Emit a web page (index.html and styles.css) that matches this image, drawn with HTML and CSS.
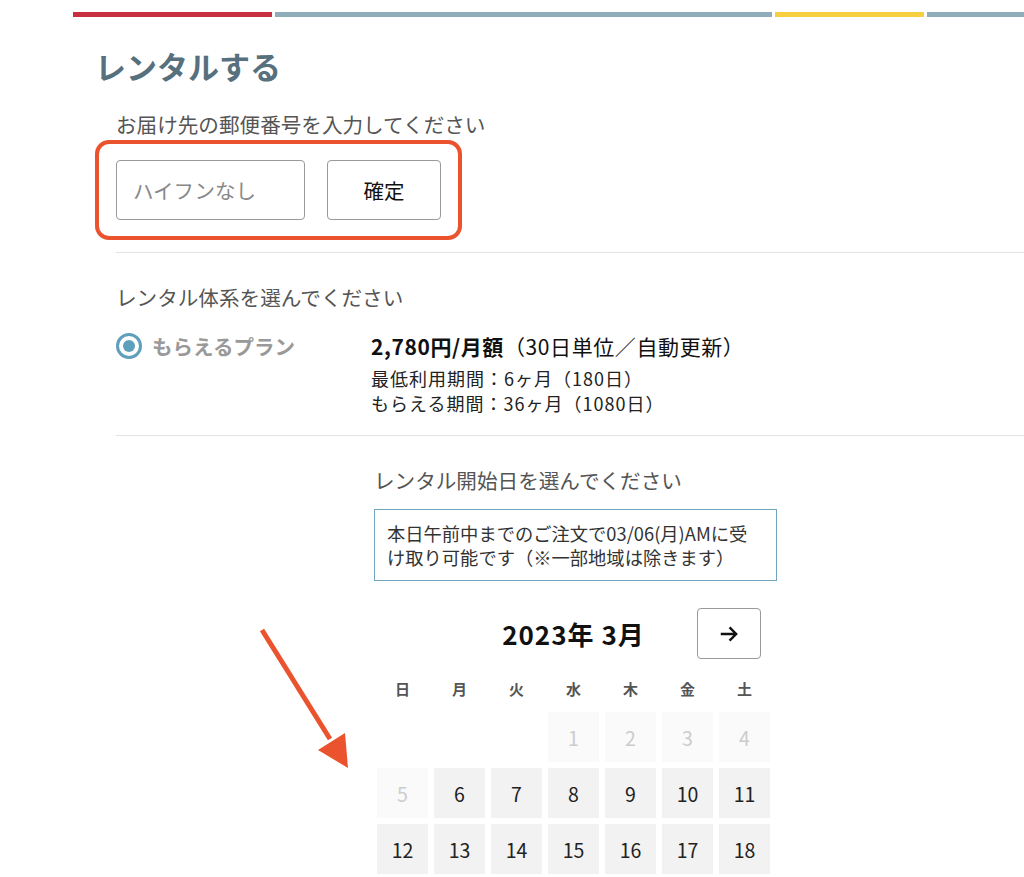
FILE: index.html
```html
<!DOCTYPE html>
<html lang="ja">
<head>
<meta charset="utf-8">
<title>レンタルする</title>
<link rel="stylesheet" href="styles.css">
</head>
<body>

<div class="page">

  <div class="steps">
    <span class="step red"></span>
    <span class="step gray long"></span>
    <span class="step yellow"></span>
    <span class="step gray rest"></span>
  </div>

  <h1 class="title">レンタルする</h1>

  <div class="content">

    <p class="label">お届け先の郵便番号を入力してください</p>
    <div class="zip-box">
      <input class="zip-input" type="text" placeholder="ハイフンなし">
      <button class="zip-button">確定</button>
    </div>

    <hr class="divider">

    <p class="label label-plan">レンタル体系を選んでください</p>
    <div class="plan">
      <label class="plan-name">
        <span class="radio"><span class="radio-dot"></span></span>
        もらえるプラン
      </label>
      <div class="plan-info">
        <p class="price"><b>2,780円/月額</b>（30日単位／自動更新）</p>
        <p class="term">最低利用期間：6ヶ月（180日）</p>
        <p class="term">もらえる期間：36ヶ月（1080日）</p>
      </div>
    </div>

    <hr class="divider divider-plan">

    <div class="start">
      <p class="label">レンタル開始日を選んでください</p>
      <div class="notice">本日午前中までのご注文で03/06(月)AMに受け取り可能です（※一部地域は除きます）</div>

      <div class="calendar">
        <div class="cal-head">
          <span></span>
          <span class="cal-month">2023年 3月</span>
          <button class="cal-next">
            <svg width="22" height="22" viewBox="0 0 20 20"><path d="M2.5 10h14M10.5 4l6 6-6 6" fill="none" stroke="#111" stroke-width="2.2"/></svg>
          </button>
        </div>
        <div class="cal-week">
          <span>日</span><span>月</span><span>火</span><span>水</span><span>木</span><span>金</span><span>土</span>
        </div>
        <div class="cal-days">
          <span class="day empty"></span>
          <span class="day empty"></span>
          <span class="day empty"></span>
          <span class="day off">1</span>
          <span class="day off">2</span>
          <span class="day off">3</span>
          <span class="day off">4</span>
          <span class="day off">5</span>
          <span class="day">6</span>
          <span class="day">7</span>
          <span class="day">8</span>
          <span class="day">9</span>
          <span class="day">10</span>
          <span class="day">11</span>
          <span class="day">12</span>
          <span class="day">13</span>
          <span class="day">14</span>
          <span class="day">15</span>
          <span class="day">16</span>
          <span class="day">17</span>
          <span class="day">18</span>
        </div>
      </div>
    </div>

  </div>

  <!-- annotation arrow -->
  <svg class="pointer" width="110" height="150" viewBox="0 0 110 150">
    <line x1="12" y1="15" x2="80" y2="124" stroke="#ea532d" stroke-width="5"/>
    <polygon points="98,153 68,135 95,118" fill="#ea532d"/>
  </svg>

</div>

</body>
</html>
```

FILE: styles.css
```css
body {
    margin: 0;
    font-family: "Noto Sans CJK JP", "Noto Sans", sans-serif;
    color: #222;
    background: #fff;
}

p {
    margin: 0;
}

.page {
    position: relative;
    padding-left: 73px;
    height: 877px;
    overflow: hidden;
}

.steps {
    display: flex;
    gap: 3px;
    margin-top: 12px;
    height: 5px;
}

.step {
    display: block;
    height: 5px;
    width: 199px;
}
.step.long { width: 497px; }
.step.yellow { width: 149px; }
.step.rest { flex: 1; }
.red { background-color: #c8303f; }
.gray { background-color: #8fadb8; }
.yellow { background-color: #f5cf3f; }

.title {
    margin: 29px 0 0 22px;
    font-size: 31px;
    line-height: 40px;
    font-weight: 700;
    color: #56707e;
}

.content {
    margin-left: 43px;
}

.label {
    font-size: 20.6px;
    line-height: 28px;
    color: #555;
    margin-top: 24px;
}

.zip-box {
    display: flex;
    gap: 22px;
    width: 329px;
    margin: 2px 0 0 -21px;
    padding: 16px 13px 16px 17px;
    border: 4px solid #ea532d;
    border-radius: 14px;
}

.zip-input {
    width: 189px;
    height: 60px;
    box-sizing: border-box;
    padding: 0 16px;
    border: 1px solid #999;
    border-radius: 4px;
    font-family: inherit;
    font-size: 20.5px;
}
.zip-input::placeholder {
    color: #888;
}

.zip-button {
    width: 114px;
    height: 60px;
    border: 1px solid #999;
    border-radius: 4px;
    background: #fff;
    font-family: inherit;
    font-size: 20.5px;
    color: #111;
}

.divider {
    border: 0;
    border-top: 1px solid #e2e2e2;
    margin: 12px 0 0;
}

.label-plan {
    margin-top: 30px;
}

.plan {
    display: flex;
    margin-top: 21px;
}

.plan-name {
    display: flex;
    align-items: center;
    gap: 10px;
    width: 255px;
    height: 28px;
    font-size: 20.5px;
    font-weight: 700;
    color: #999;
}

.radio {
    display: flex;
    align-items: center;
    justify-content: center;
    width: 26px;
    height: 26px;
    box-sizing: border-box;
    border: 3px solid #5e9fbb;
    border-radius: 50%;
}

.radio-dot {
    width: 12px;
    height: 12px;
    border-radius: 50%;
    background: #5e9fbb;
}

.price {
    font-size: 21px;
    line-height: 28px;
    letter-spacing: 0.6px;
    color: #111;
}

.price b {
    font-weight: 700;
}

.term {
    font-size: 18px;
    line-height: 25px;
    letter-spacing: 1px;
    color: #222;
}

.price + .term {
    margin-top: 6px;
}

.divider-plan {
    margin-top: 19px;
}

.start {
    margin-left: 258px;
}

.start .label {
    margin-top: 30px;
}

.notice {
    width: 378px;
    margin-top: 15px;
    padding: 11px 11px 11px 12px;
    border: 1px solid #6ea6bf;
    font-size: 18.3px;
    line-height: 24px;
    color: #333;
}

.calendar {
    width: 393px;
    margin-left: 3px;
}

.cal-head {
    display: grid;
    grid-template-columns: 1fr auto 1fr;
    align-items: center;
    margin-top: 27px;
}

.cal-month {
    font-size: 26px;
    font-weight: 700;
    letter-spacing: 1px;
    color: #111;
}

.cal-next {
    justify-self: end;
    margin-right: 9px;
    width: 64px;
    height: 51px;
    border: 1px solid #999;
    border-radius: 4px;
    background: #fff;
    display: flex;
    align-items: center;
    justify-content: center;
}

.cal-week {
    display: grid;
    grid-template-columns: repeat(7, 51px);
    column-gap: 6px;
    margin-top: 20px;
    font-size: 15px;
    line-height: 20px;
    font-weight: 700;
    color: #555;
    text-align: center;
}

.cal-days {
    display: grid;
    grid-template-columns: repeat(7, 51px);
    grid-auto-rows: 50px;
    gap: 6px;
    margin-top: 13px;
}

.day {
    display: flex;
    align-items: center;
    justify-content: center;
    background: #f2f2f2;
    font-size: 19.5px;
    color: #222;
}

.day.off {
    background: #fafafa;
    color: #ccc;
}

.day.empty {
    background: none;
}

.pointer {
    position: absolute;
    left: 250px;
    top: 615px;
    overflow: visible;
}
```
